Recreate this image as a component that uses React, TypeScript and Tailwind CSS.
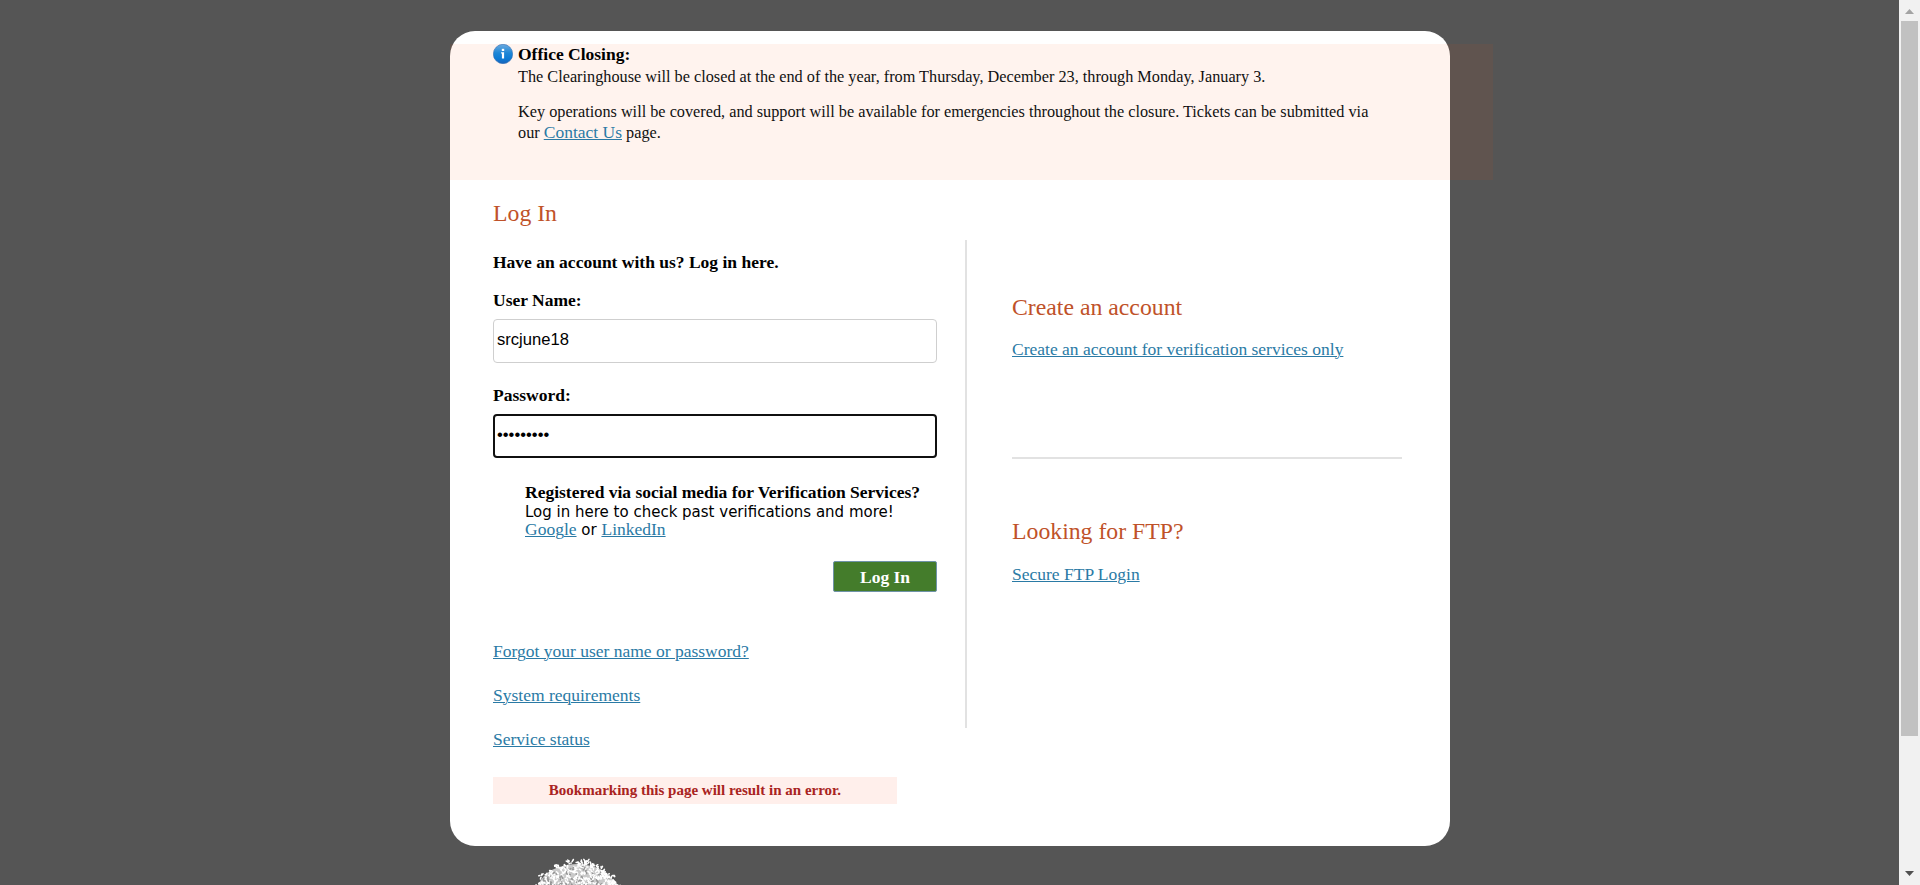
import type { ReactNode } from "react";

function Link({ children }: { children: ReactNode }) {
  return (
    <a href="#" className="text-[17.5px] text-[#2a7aa5] underline decoration-1 underline-offset-[1px] [text-decoration-skip-ink:auto]">
      {children}
    </a>
  );
}

function SectionTitle({ children }: { children: ReactNode }) {
  return <h2 className="text-[23.75px] leading-7 text-[#bf5229]">{children}</h2>;
}

function InfoIcon() {
  return (
    <svg viewBox="0 0 20 20" className="h-5 w-5 shrink-0">
      <defs>
        <linearGradient id="infoFill" x1="0" y1="0" x2="0" y2="1">
          <stop offset="0" stopColor="#6cabe0" />
          <stop offset="0.45" stopColor="#1d86d6" />
          <stop offset="0.75" stopColor="#0c7ad4" />
          <stop offset="1" stopColor="#1b62b8" />
        </linearGradient>
      </defs>
      <circle cx="10" cy="10" r="9.7" fill="url(#infoFill)" stroke="#2f6db3" strokeWidth="0.6" />
      <rect x="8.8" y="4.8" width="2.4" height="2.2" fill="#fff" />
      <path d="M8.1 8.3h3v6.3H8.9V9.5h-.8z" fill="#fff" />
    </svg>
  );
}

// Foliage is a dome of short strokes, placed by a fixed-seed generator.
function makeLeaves() {
  let seed = 11;
  const next = () => {
    seed = (seed * 16807) % 2147483647;
    return seed / 2147483647;
  };
  const leaves: { d: string; c: string }[] = [];
  for (let i = 0; i < 560; i++) {
    const a = Math.PI * (1 + next());
    const r = Math.sqrt(next());
    const edge = 1 + 0.04 * Math.sin(a * 17);
    const x = 45 + Math.cos(a) * r * edge * 45;
    const y = 42 + Math.sin(a) * r * edge * 38;
    const dx = (next() - 0.5) * 4;
    const dy = (next() - 0.5) * 5;
    const grey = r < 0.9 && next() < 0.2;
    leaves.push({
      d: `M${x.toFixed(1)} ${y.toFixed(1)}l${dx.toFixed(1)} ${dy.toFixed(1)}`,
      c: grey ? "#959595" : "#fff",
    });
  }
  return leaves;
}

const LEAVES = makeLeaves();

function TreeLogo() {
  return (
    <svg viewBox="0 0 90 28" className="h-7 w-[90px]">
      <path d="M5 30 Q14 8 45 7 Q76 8 85 30z" fill="#c9c9c9" />
      {LEAVES.map((l, i) => (
        <path key={i} d={l.d} stroke={l.c} strokeWidth="1.5" strokeLinecap="round" />
      ))}
    </svg>
  );
}

function Scrollbar() {
  return (
    <div className="flex w-[21px] shrink-0 flex-col items-center bg-[#f1f1f1]">
      <svg viewBox="0 0 21 21" className="h-[21px] w-[21px]">
        <path d="M6 14h9l-4.5-5z" fill="#a3a3a3" />
      </svg>
      <div className="h-[715px] w-[17px] bg-[#c1c1c1]" />
      <svg viewBox="0 0 21 21" className="mt-auto h-[21px] w-[21px]">
        <path d="M6 7h9l-4.5 5z" fill="#505050" />
      </svg>
    </div>
  );
}

export default function App() {
  return (
    <div className="flex h-[885px] w-full overflow-hidden bg-[#555555] font-['Liberation_Serif',serif] text-[17.5px] leading-5 text-black">
      <div className="flex flex-1 flex-col pl-[450px] pt-[31px]">
        <main className="h-[815px] w-[1000px] shrink-0 rounded-[25px] bg-white pt-[13px]">
          <section className="flex h-[136px] w-[1043px] gap-[5px] bg-[#ff4500]/[0.065] pl-[43px]">
            <InfoIcon />
            <div>
              <h3 className="font-bold">Office Closing:</h3>
              <div className="text-[16.25px] whitespace-nowrap text-[#111]">
                <p className="mt-[3px]">
                  The Clearinghouse will be closed at the end of the year, from Thursday, December 23, through Monday, January 3.
                </p>
                <p className="mt-[15px]">
                  Key operations will be covered, and support will be available for emergencies throughout the closure. Tickets can be submitted via
                  <br />
                  our <Link>Contact Us</Link> page.
                </p>
              </div>
            </div>
          </section>

          <div className="px-[43px] pt-[19px]">
            <SectionTitle>Log In</SectionTitle>
            <div className="mt-[13px] flex items-start">
              <div className="w-[472px] pt-3">
                <form className="w-[444px]">
                  <p className="font-bold">Have an account with us? Log in here.</p>
                  <label className="mt-[18px] block font-bold">User Name:</label>
                  <input
                    type="text"
                    defaultValue="srcjune18"
                    className="mt-[9px] block h-11 w-full rounded-[4px] border border-[#cfcfcf] bg-white px-[3px] pb-[2px] font-['Liberation_Sans',sans-serif] text-[16.6px] outline-none"
                  />
                  <label className="mt-[22px] block font-bold">Password:</label>
                  <input
                    type="password"
                    defaultValue="password1"
                    className="mt-[9px] block h-11 w-full rounded-[4px] border-2 border-[#101010] bg-white px-[2px] pb-[2px] font-['Liberation_Sans',sans-serif] text-[16.6px] outline-none"
                  />
                  <div className="mt-6 ml-8 whitespace-nowrap">
                    <p className="font-bold">Registered via social media for Verification Services?</p>
                    <div className="mt-px font-['DejaVu_Sans',sans-serif] text-[15px] leading-[18px]">
                      <p className="h-[17px]">Log in here to check past verifications and more!</p>
                      <p className="h-[19px]">
                        <span className="font-['Liberation_Serif',serif]"><Link>Google</Link></span> or{" "}
                        <span className="font-['Liberation_Serif',serif]"><Link>LinkedIn</Link></span>
                      </p>
                    </div>
                  </div>
                  <button
                    type="button"
                    className="mt-[22px] ml-auto block h-[31px] w-[104px] rounded-[2px] border border-[#6f93a8] bg-[#447c2b] font-bold text-white"
                  >
                    Log In
                  </button>
                </form>
                <nav className="mt-[49px] flex flex-col items-start gap-6">
                  <Link>Forgot your user name or password?</Link>
                  <Link>System requirements</Link>
                  <Link>Service status</Link>
                </nav>
                <p className="mt-7 h-[27px] w-[404px] bg-[#ffefeb] text-center text-[15px] leading-[27px] font-bold text-[#a92321]">
                  Bookmarking this page will result in an error.
                </p>
              </div>

              <div className="h-[488px] w-0.5 bg-[#e2e2e2]" />

              <aside className="ml-[45px] flex w-[390px] flex-col items-start pt-[53px]">
                <SectionTitle>Create an account</SectionTitle>
                <div className="mt-[18px] flex">
                  <Link>Create an account for verification services only</Link>
                </div>
                <div className="mt-[98px] h-0.5 w-full bg-[#e2e2e2]" />
                <div className="mt-[58px]">
                  <SectionTitle>Looking for FTP?</SectionTitle>
                </div>
                <div className="mt-[19px] flex">
                  <Link>Secure FTP Login</Link>
                </div>
              </aside>
            </div>
          </div>
        </main>
        <footer className="mt-[11px] pl-[82px]">
          <TreeLogo />
        </footer>
      </div>
      <Scrollbar />
    </div>
  );
}
